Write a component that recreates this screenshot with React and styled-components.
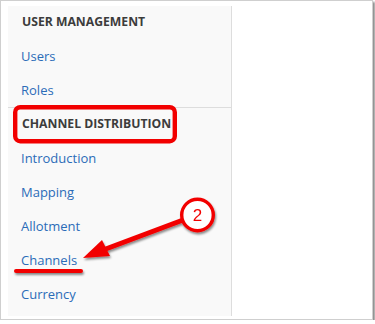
import styled, { createGlobalStyle } from "styled-components";

const Global = createGlobalStyle`
  html, body { margin: 0; padding: 0; background: #ffffff; }
  body { font-family: "Open Sans", "Liberation Sans", sans-serif; }
`

const Frame = styled.div`
  position: relative;
  box-sizing: border-box;
  width: 373px;
  height: 320px;
  border: 1px solid #cfcfcf;
  box-shadow: 2px 2px 2px rgba(0, 0, 0, 0.45);
  background: #ffffff;
  padding: 5px 0 0 7px;
`

const Sidebar = styled.nav`
  box-sizing: border-box;
  width: 224px;
  height: 310px;
  background: #f9f9f9;
  border-right: 1px solid #dddddd;
  padding-top: 1px;
  padding-bottom: 4px;
`

const Section = styled.div`
  border-bottom: ${p => (p.$divider ? "1px solid #dddddd" : "none")};
`

const Header = styled.div`
  padding: ${p => (p.$first ? "5px" : "6px")} 0 7px 14px;
  line-height: 20px;
  font-size: 12.2px;
  font-weight: 700;
  color: #3c3c3c;
  text-transform: uppercase;
`

const Link = styled.a`
  display: block;
  padding: 7px 0 7px 13px;
  line-height: 20px;
  font-size: 13px;
  color: #2b6cb8;
  text-decoration: none;
`

const Overlay = styled.svg`
  position: absolute;
  top: -1px;
  left: -1px;
  overflow: visible;
  pointer-events: none;
`

const RED = "#f20000";

function Annotations() {
  return (
    <Overlay width="373" height="320">
      <defs>
        <filter id="sh" x="-20%" y="-20%" width="140%" height="160%">
          <feDropShadow dx="1" dy="2" stdDeviation="1.2" floodColor="#000" floodOpacity="0.45" />
        </filter>
      </defs>
      <rect x="15.2" y="107.2" width="159.6" height="34" rx="5" fill="none" stroke={RED} strokeWidth="4.4" />
      <g filter="url(#sh)">
        <line x1="16" y1="271" x2="81" y2="271" stroke={RED} strokeWidth="4" strokeLinecap="round" />
        <line x1="183" y1="220" x2="103" y2="250" stroke={RED} strokeWidth="5" strokeLinecap="round" />
        <polygon points="83,258 102,240 110,256" fill={RED} />
        <circle cx="197.5" cy="215" r="15.8" fill="#ffffff" stroke={RED} strokeWidth="3.4" />
        <text x="197.5" y="221" textAnchor="middle" fontFamily="Liberation Sans, Arial, sans-serif" fontSize="17" fill={RED}>2</text>
      </g>
    </Overlay>
  )
}

export default function App() {
  return (
    <>
      <Global />
      <Frame>
        <Sidebar>
          <Section $divider>
            <Header $first>User Management</Header>
            <Link>Users</Link>
            <Link>Roles</Link>
          </Section>
          <Section>
            <Header>Channel Distribution</Header>
            <Link>Introduction</Link>
            <Link>Mapping</Link>
            <Link>Allotment</Link>
            <Link>Channels</Link>
            <Link>Currency</Link>
          </Section>
        </Sidebar>
        <Annotations />
      </Frame>
    </>
  )
}
